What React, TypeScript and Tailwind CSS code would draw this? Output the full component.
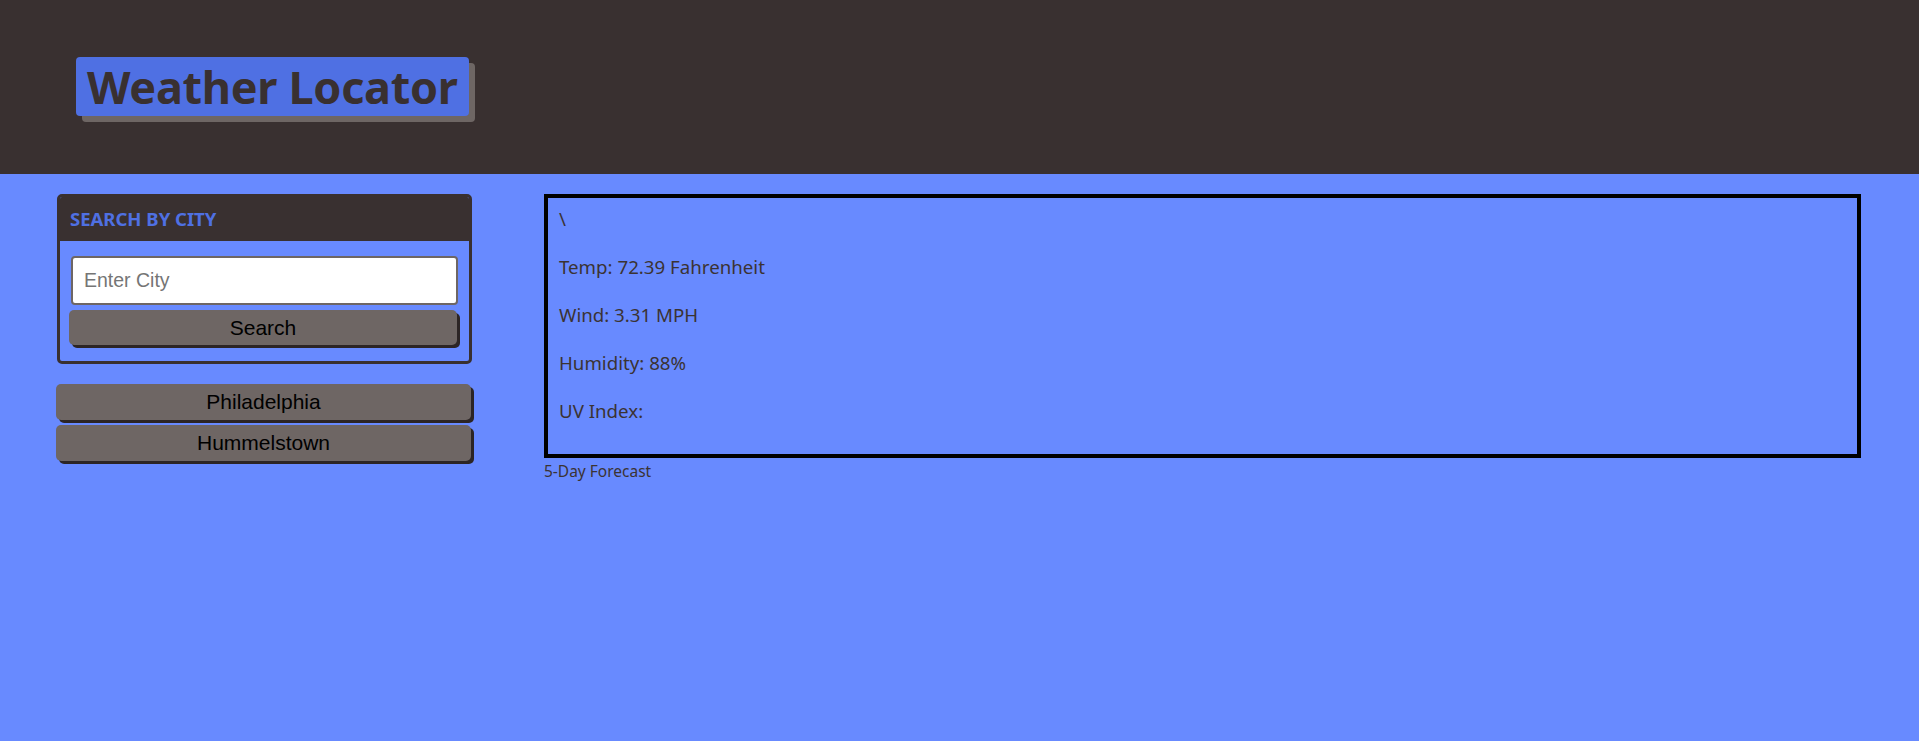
import React from "react";

export default function App() {
  const plex = { fontFamily: '"Noto Sans", "Open Sans", sans-serif' };
  const arial = { fontFamily: '"Liberation Sans", Arial, sans-serif' };
  return (
    <div className="min-h-screen w-full bg-[#688aff]" style={plex}>
      <header className="h-[174px] bg-[#393030] pl-[76px] pt-[57px]">
        <div className="inline-flex h-[59px] items-center rounded-[4px] bg-[#4f70e3] px-[11px] shadow-[6px_6px_0_#6e6664]">
          <h1 className="text-[45px] font-bold leading-none tracking-[-0.3px] text-[#393030]">Weather Locator</h1>
        </div>
      </header>
      <main className="flex gap-[72px] pl-[57px] pr-[58px] pt-[20px]">
        <aside className="flex w-[415px] shrink-0 flex-col">
          <section className="overflow-hidden rounded-[5px] border-[3px] border-[#393030]">
            <div className="flex h-[44px] items-center bg-[#393030] px-[10px]">
              <h2 className="text-[18.5px] font-bold text-[#4f70e3]">SEARCH BY CITY</h2>
            </div>
            <div className="flex flex-col items-start pb-[16px] pl-[9px] pt-[15px]">
              <input
                placeholder="Enter City"
                className="ml-[2px] h-[49px] w-[387px] rounded-[4px] border-2 border-[#6e6664] bg-white px-[11px] text-[19.5px] text-black placeholder:text-[#757575] outline-none"
                style={arial}
              />
              <button
                className="mt-[5px] h-[35px] w-[388px] rounded-[5px] bg-[#6e6664] text-[21px] text-black shadow-[3px_3px_0_#2c2525]"
                style={arial}
              >
                Search
              </button>
            </div>
          </section>
          <div className="-ml-[1px] mt-[20px] flex w-[415px] flex-col gap-[5px]">
            {["Philadelphia", "Hummelstown"].map((c) => (
              <button
                key={c}
                className="h-[36px] rounded-[5px] bg-[#6e6664] text-[21px] text-black shadow-[3px_3px_0_#2c2525]"
                style={arial}
              >
                {c}
              </button>
            ))}
          </div>
        </aside>
        <section className="flex-1">
          <div className="h-[264px] border-[4px] border-black px-[11px] pt-[10px] text-[18.7px] text-[#3b3333]">
            <p className="leading-[22px]">\</p>
            <p className="mt-[26px] leading-[22px]">Temp: 72.39 Fahrenheit</p>
            <p className="mt-[26px] leading-[22px]">Wind: 3.31 MPH</p>
            <p className="mt-[26px] leading-[22px]">Humidity: 88%</p>
            <p className="mt-[26px] leading-[22px]">UV Index:</p>
          </div>
          <p className="mt-[4px] text-[15.5px] leading-[18px] text-[#3b3333]">5-Day Forecast</p>
        </section>
      </main>
    </div>
  );
}
